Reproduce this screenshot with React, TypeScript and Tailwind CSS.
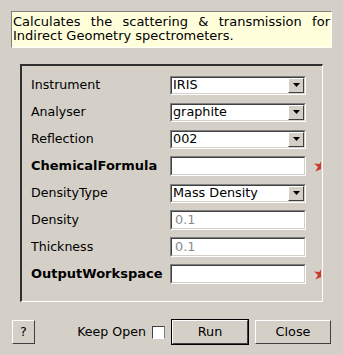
import React from 'react';

const font = { fontFamily: '"DejaVu Sans", Verdana, sans-serif' };

const Sunken: React.FC<{ children?: React.ReactNode; className?: string }> = ({ children, className }) => (
  <div className={`border border-t-[#808080] border-l-[#808080] border-b-white border-r-white ${className ?? ''}`}>
    <div className="h-full w-full border border-t-[#404040] border-l-[#404040] border-b-[#d4d0c8] border-r-[#d4d0c8] bg-white flex items-center">
      {children}
    </div>
  </div>
);

const Combo: React.FC<{ value: string }> = ({ value }) => (
  <Sunken className="w-[136px] h-[19px]">
    <span className="flex-1 pl-[1px] text-[12.8px] leading-none text-black">{value}</span>
    <div className="h-[15px] w-[16px] bg-[#d4d0c8] border border-t-white border-l-white border-b-[#404040] border-r-[#404040] flex items-center justify-center">
      <svg width="7" height="4" viewBox="0 0 7 4">
        <path d="M0 0h7L3.5 4z" fill="#000" />
      </svg>
    </div>
  </Sunken>
);

const TextBox: React.FC<{ value?: string }> = ({ value }) => (
  <Sunken className="w-[136px] h-[20px]">
    <span className="pl-[3px] text-[12.8px] leading-none text-[#8a8a8a]">{value}</span>
  </Sunken>
);

const Star = () => (
  <svg width="9" height="14" viewBox="0 0 9 14" className="ml-[6px]">
    <path
      d="M10.5 0 L11.2 5.2 L16.5 6.5 L11.8 8.8 L12 14 L8.5 10.2 L3.4 12.6 L6 8 L2 4.4 L7.4 5 Z"
      fill="#c83a2a"
    />
  </svg>
);

interface Row {
  label: string;
  bold?: boolean;
  kind: 'combo' | 'text';
  value?: string;
  required?: boolean;
}

const rows: Row[] = [
  { label: 'Instrument', kind: 'combo', value: 'IRIS' },
  { label: 'Analyser', kind: 'combo', value: 'graphite' },
  { label: 'Reflection', kind: 'combo', value: '002' },
  { label: 'ChemicalFormula', bold: true, kind: 'text', required: true },
  { label: 'DensityType', kind: 'combo', value: 'Mass Density' },
  { label: 'Density', kind: 'text', value: '0.1' },
  { label: 'Thickness', kind: 'text', value: '0.1' },
  { label: 'OutputWorkspace', bold: true, kind: 'text', required: true },
];

const Button: React.FC<{ children: React.ReactNode; className?: string; isDefault?: boolean }> = ({ children, className, isDefault }) => (
  <div className={`${isDefault ? 'border border-black' : ''} ${className ?? ''}`}>
    <div className="h-full w-full border border-t-white border-l-white border-b-[#404040] border-r-[#404040] bg-[#d4d0c8] flex items-center justify-center text-[12.8px] text-black">
      {children}
    </div>
  </div>
);

export default function App() {
  return (
    <div className="w-[343px] h-[355px] bg-[#d4d0c8] pt-[11px] pl-[11px] overflow-hidden" style={font}>
      <div className="w-[321px] h-[37px] bg-[#ffffdc] border border-t-[#808080] border-l-[#808080] border-b-white border-r-white px-[1px] pt-[3px] text-[13px] leading-[14px] text-black text-justify [text-align-last:left]">
        Calculates the scattering &amp; transmission for Indirect Geometry spectrometers.
      </div>

      <div className="mt-[16px] ml-[9px] w-[303px] h-[238px] border-t-2 border-l-2 border-t-[#303030] border-l-[#303030] border-b border-r border-b-white border-r-white pt-[9px] pl-[9px] flex flex-col gap-[7px]">
        {rows.map((r) => (
          <div key={r.label} className="flex items-center h-[20px]">
            <span className={`w-[139px] text-black whitespace-nowrap ${r.bold ? 'font-bold text-[13px]' : 'text-[12.6px]'}`}>{r.label}</span>
            {r.kind === 'combo' ? <Combo value={r.value ?? ''} /> : <TextBox value={r.value} />}
            {r.required && <Star />}
          </div>
        ))}
      </div>

      <div className="mt-[17px] flex items-center">
        <Button className="ml-[1px] w-[23px] h-[24px]">?</Button>
        <div className="ml-auto flex items-center pr-[12px]">
          <span className="text-[12.6px] text-black">Keep Open</span>
          <div className="ml-[6px] w-[13px] h-[13px] bg-white border border-t-[#404040] border-l-[#404040] border-b-white border-r-[#808080]" />
          <Button isDefault className="ml-[6px] w-[78px] h-[26px]">Run</Button>
          <Button className="ml-[6px] w-[76px] h-[24px]">Close</Button>
        </div>
      </div>
    </div>
  );
}
